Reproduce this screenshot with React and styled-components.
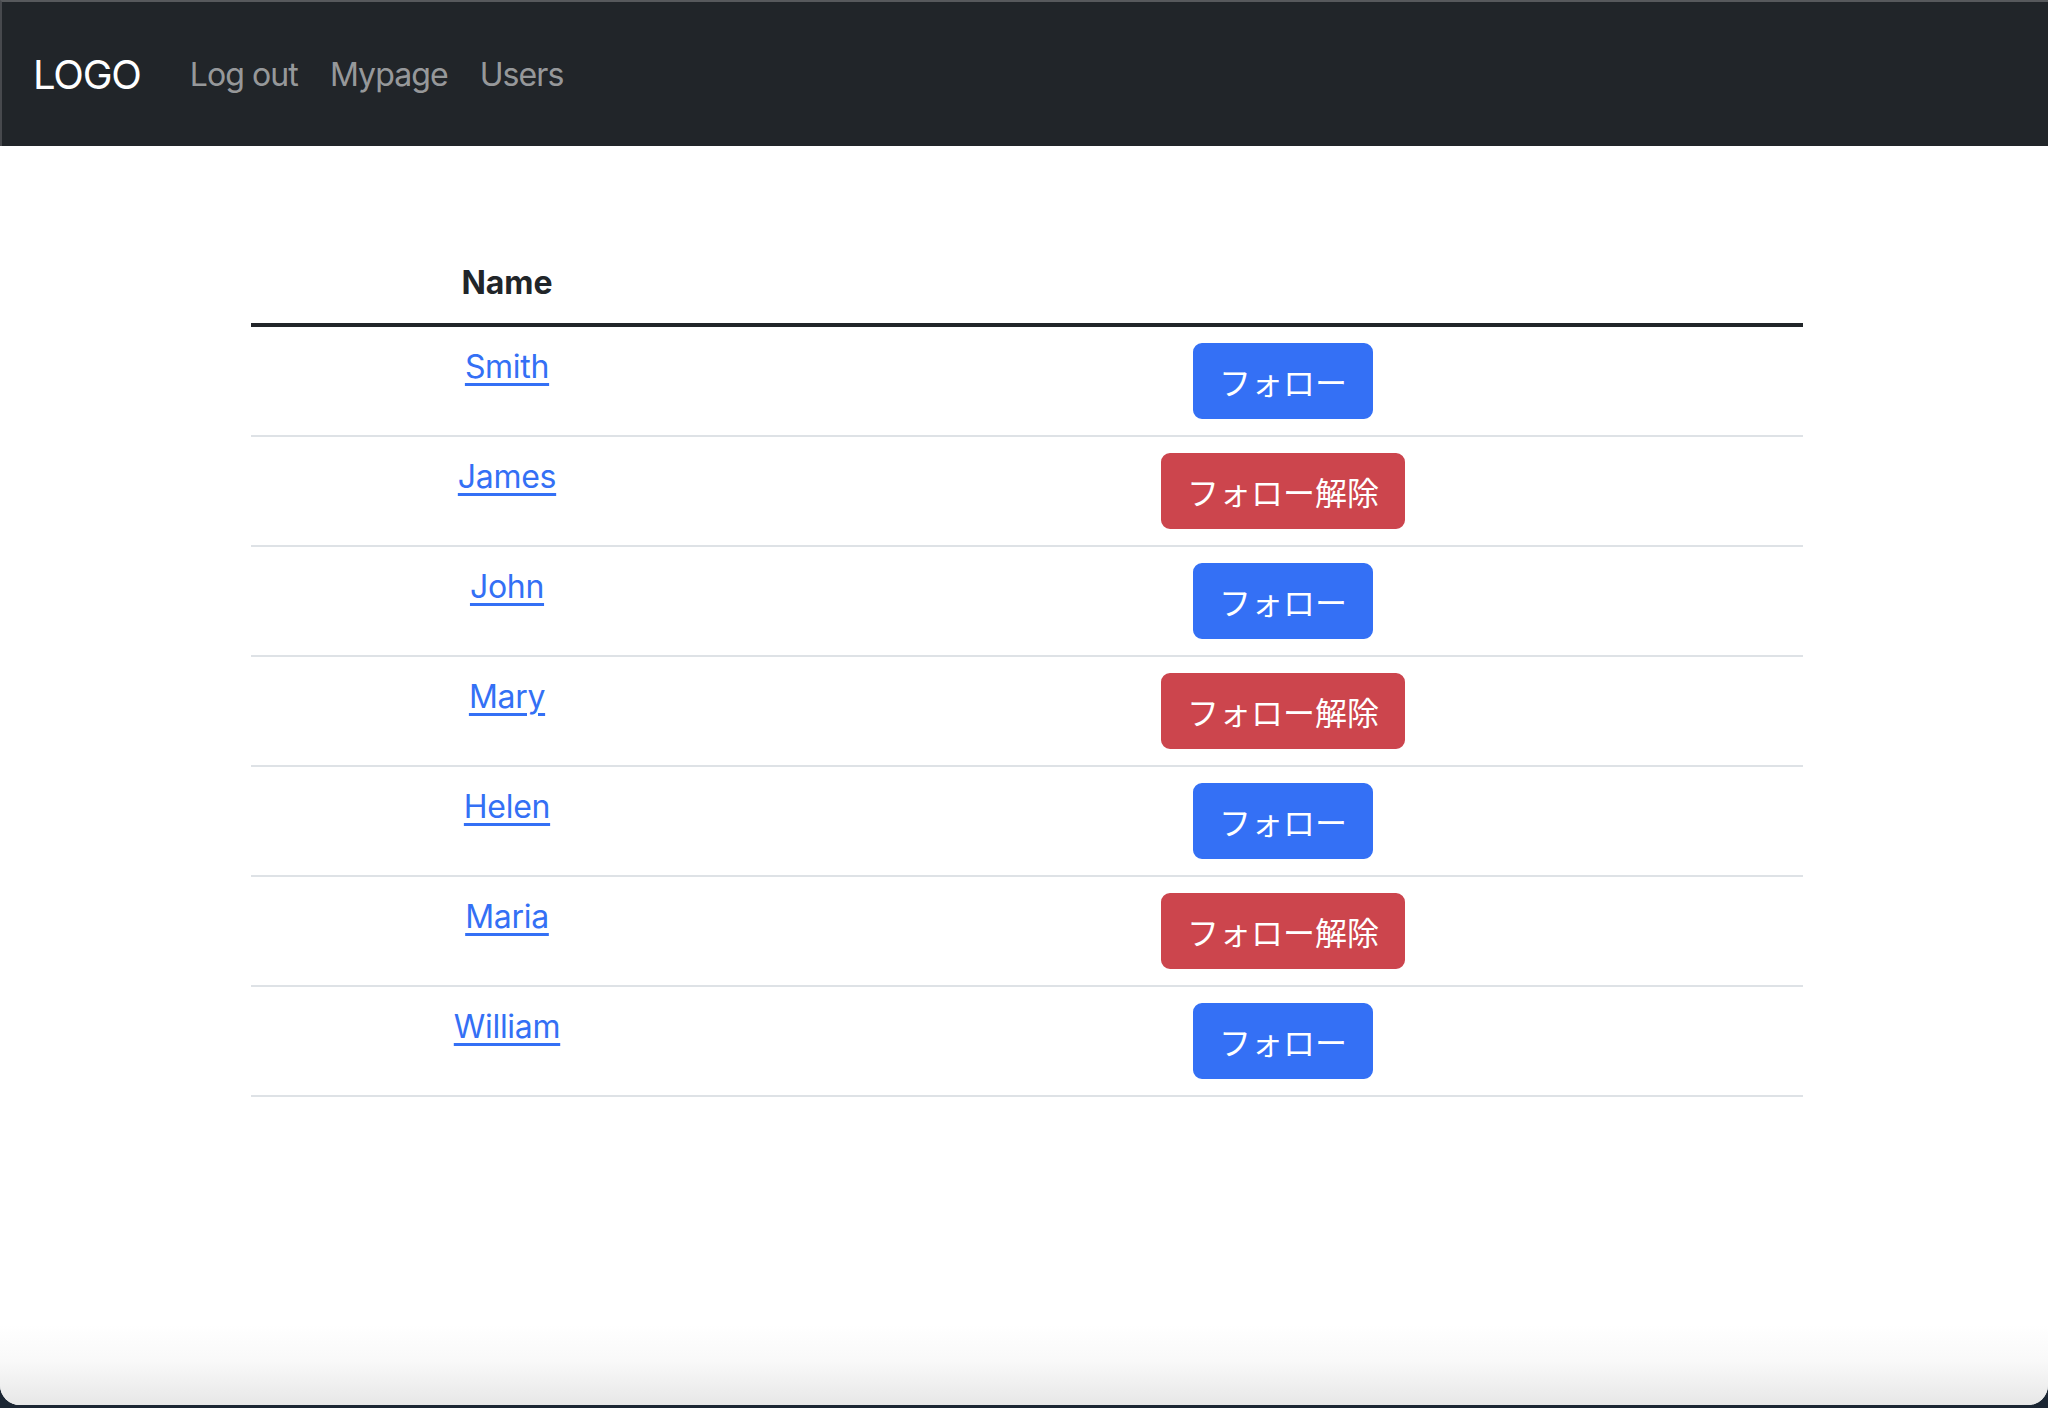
import React from 'react';
import styled, { createGlobalStyle } from 'styled-components';

const GlobalStyle = createGlobalStyle`
  html, body {
    margin: 0;
    padding: 0;
    background: #1b2633;
  }
  body {
    font-family: Inter, "Noto Sans", "Noto Sans CJK JP", sans-serif;
    color: #212529;
  }
`;

const Window = styled.div`
  height: 1405px;
  display: flex;
  flex-direction: column;
  background: #fff;
  border-radius: 0 0 20px 20px;
  overflow: hidden;
`;

const Navbar = styled.nav`
  display: flex;
  align-items: center;
  background: #212529;
  border-top: 2px solid #57595c;
  border-left: 2px solid #47494d;
  padding: 2px 24px 0 31px;
  box-sizing: border-box;
  height: 146px;
`;

const Brand = styled.a`
  font-size: 40px;
  line-height: 60px;
  color: #fff;
  letter-spacing: -1.2px;
  margin-right: 33px;
  text-decoration: none;
`;

const NavLink = styled.a`
  font-size: 32px;
  line-height: 48px;
  padding: 16px;
  color: rgba(255, 255, 255, 0.55);
  letter-spacing: -0.9px;
  text-decoration: none;
`;

const Main = styled.main`
  flex: 1;
  padding: 96px 0 0 6px;
`;

const Table = styled.table`
  width: 1552px;
  margin: 0 auto;
  border-collapse: collapse;
  font-size: 32px;
  line-height: 48px;
`;

const HeadCell = styled.th`
  padding: 17px 16px 16px;
  font-weight: 700;
  text-align: center;
  vertical-align: top;
  border-bottom: 4px solid #212529;
  width: ${(p) => p.width || 'auto'};
`;

const Row = styled.tr`
  border-bottom: 2px solid #dee2e6;
`;

const Cell = styled.td`
  padding: 16px;
  text-align: center;
  vertical-align: top;
`;

const NameLink = styled.a`
  color: #3470f5;
  text-decoration: underline;
  text-decoration-thickness: 3px;
  text-underline-offset: 5px;
  letter-spacing: -0.3px;
`;

const FollowButton = styled.button`
  display: inline-block;
  font-family: "Noto Sans CJK JP", sans-serif;
  font-size: 32px;
  line-height: 48px;
  padding: 12px 24px;
  border: 2px solid ${(p) => (p.unfollow ? '#cc454d' : '#3470f5')};
  background: ${(p) => (p.unfollow ? '#cc454d' : '#3470f5')};
  color: #fff;
  border-radius: 9px;
  cursor: pointer;
`;

const Shade = styled.div`
  height: 80px;
  background: linear-gradient(180deg, #ffffff 0%, #f9f9f9 45%, #e7e7e7 100%);
`;

const users = [
  { name: 'Smith', following: false },
  { name: 'James', following: true },
  { name: 'John', following: false },
  { name: 'Mary', following: true },
  { name: 'Helen', following: false },
  { name: 'Maria', following: true },
  { name: 'William', following: false },
];

export default function App() {
  return (
    <>
      <GlobalStyle />
      <Window>
        <Navbar>
          <Brand href="#">LOGO</Brand>
          <NavLink href="#">Log out</NavLink>
          <NavLink href="#">Mypage</NavLink>
          <NavLink href="#">Users</NavLink>
        </Navbar>
        <Main>
          <Table>
            <thead>
              <tr>
                <HeadCell width="480px">Name</HeadCell>
                <HeadCell />
              </tr>
            </thead>
            <tbody>
              {users.map((u) => (
                <Row key={u.name}>
                  <Cell>
                    <NameLink href="#">{u.name}</NameLink>
                  </Cell>
                  <Cell>
                    <FollowButton unfollow={u.following}>
                      {u.following ? 'フォロー解除' : 'フォロー'}
                    </FollowButton>
                  </Cell>
                </Row>
              ))}
            </tbody>
          </Table>
        </Main>
        <Shade />
      </Window>
    </>
  );
}
